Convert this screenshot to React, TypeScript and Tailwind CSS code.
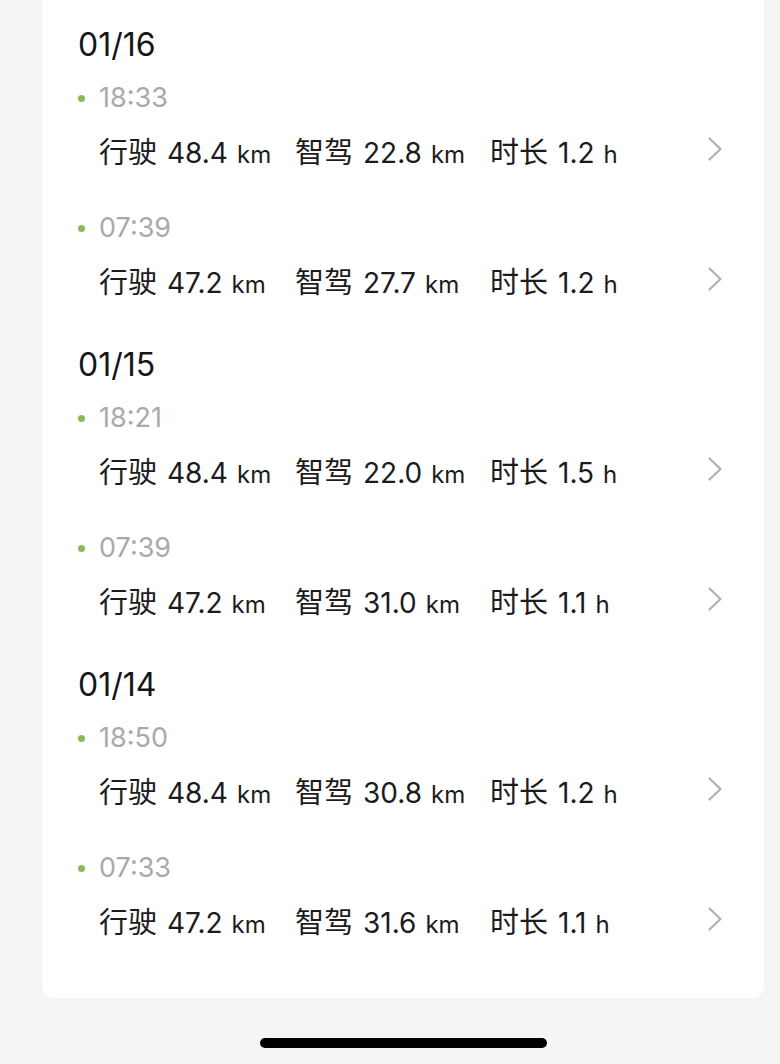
import React from 'react';

type Trip = { time: string; drive: string; smart: string; hours: string };
type Day = { date: string; trips: Trip[] };

const days: Day[] = [
  {
    date: '01/16',
    trips: [
      { time: '18:33', drive: '48.4', smart: '22.8', hours: '1.2' },
      { time: '07:39', drive: '47.2', smart: '27.7', hours: '1.2' },
    ],
  },
  {
    date: '01/15',
    trips: [
      { time: '18:21', drive: '48.4', smart: '22.0', hours: '1.5' },
      { time: '07:39', drive: '47.2', smart: '31.0', hours: '1.1' },
    ],
  },
  {
    date: '01/14',
    trips: [
      { time: '18:50', drive: '48.4', smart: '30.8', hours: '1.2' },
      { time: '07:33', drive: '47.2', smart: '31.6', hours: '1.1' },
    ],
  },
];

const font = { fontFamily: 'Inter, "Noto Sans CJK SC", sans-serif' };

const Stat = ({ label, value, unit, width }: { label: string; value: string; unit: string; width: string }) => (
  <div className={`${width} flex shrink-0 items-baseline whitespace-nowrap`}>
    <span className="text-[29px] leading-[40px]">{label}</span>
    <span className="ml-[10px] text-[28px] leading-[40px]">{value}</span>
    <span className="ml-[9px] text-[24px] leading-none">{unit}</span>
  </div>
);

const TripRow = ({ trip, first }: { trip: Trip; first: boolean }) => (
  <div className={first ? 'mt-[15px]' : 'mt-[37px]'}>
    <div className="flex h-[36px] items-center">
      <span className="h-[7px] w-[7px] rounded-full bg-[#8db75c]" />
      <span className="ml-[14px] text-[27px] leading-[36px] text-[#a9a9a9]">{trip.time}</span>
    </div>
    <div className="mt-[17px] flex h-[40px] items-center pl-[21px] text-[#1c1c1c]">
      <Stat label="行驶" value={trip.drive} unit="km" width="w-[196px]" />
      <Stat label="智驾" value={trip.smart} unit="km" width="w-[195px]" />
      <Stat label="时长" value={trip.hours} unit="h" width="w-[150px]" />
      <div className="ml-auto mr-[42px] -mt-[8px]">
        <svg width="14" height="24" viewBox="0 0 14 24" fill="none">
          <polyline points="1.5,1.5 12.5,12 1.5,22.5" stroke="#b0b0b0" strokeWidth="2.2" strokeLinecap="round" strokeLinejoin="round" />
        </svg>
      </div>
    </div>
  </div>
);

export default function App() {
  return (
    <div className="min-h-[1064px] bg-[#f5f5f5]" style={font}>
      <div className="mx-[42px] w-[722px] rounded-b-[12px] bg-white pl-[36px] pt-[25px] pb-[55px]">
        {days.map((day, i) => (
          <div key={day.date} className={i > 0 ? 'mt-[42px]' : ''}>
            <div className="h-[40px] text-[32px] leading-[40px] text-[#161616]">{day.date}</div>
            {day.trips.map((trip, j) => (
              <TripRow key={trip.time + j} trip={trip} first={j === 0} />
            ))}
          </div>
        ))}
      </div>
      <div className="pl-[260px] pt-[40px]">
        <div className="h-[10px] w-[287px] rounded-full bg-black" />
      </div>
    </div>
  );
}
